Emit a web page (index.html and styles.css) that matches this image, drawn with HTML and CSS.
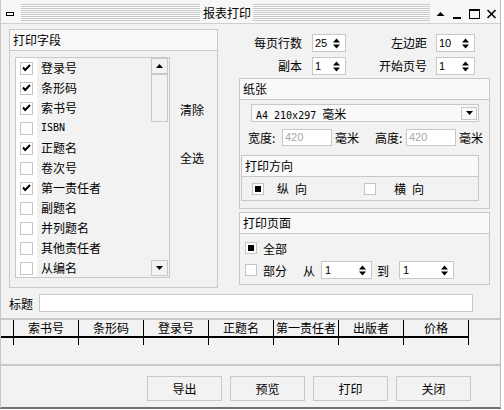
FILE: index.html
```html
<!DOCTYPE html>
<html lang="zh-CN">
<head>
<meta charset="utf-8">
<title>报表打印</title>
<link rel="stylesheet" href="styles.css">
</head>
<body>
<div class="window">
  <div class="titlebar">
    <span class="sysicon"></span>
    <span class="stripes stripes-l"></span>
    <span class="title">报表打印</span>
    <span class="stripes stripes-r"></span>
    <svg class="caption" width="62" height="23" viewBox="0 0 62 23">
      <path d="M0.5 16 4.5 12 8.5 16Z" fill="#000"/>
      <rect x="17" y="17" width="8" height="2" fill="#000"/>
      <rect x="33.5" y="9.5" width="10" height="9" fill="none" stroke="#000" stroke-width="1"/>
      <rect x="33" y="9" width="11" height="2" fill="#000"/>
      <path d="M51.5 10 59.5 18 M59.5 10 51.5 18" stroke="#000" stroke-width="1.6"/>
    </svg>
  </div>
  <div class="content">
    <div class="top">
      <section class="group fields">
        <div class="group-head">打印字段</div>
        <div class="fields-body">
          <div class="list">
            <ul class="items">
              <li class="item"><span class="cell"><span class="check"><svg width="11" height="11" viewBox="0 0 11 11"><path d="M2 4.5 4.2 7 9 2" fill="none" stroke="#000" stroke-width="2"/></svg></span></span><span class="label">登录号</span></li>
              <li class="item"><span class="cell"><span class="check"><svg width="11" height="11" viewBox="0 0 11 11"><path d="M2 4.5 4.2 7 9 2" fill="none" stroke="#000" stroke-width="2"/></svg></span></span><span class="label">条形码</span></li>
              <li class="item"><span class="cell"><span class="check"><svg width="11" height="11" viewBox="0 0 11 11"><path d="M2 4.5 4.2 7 9 2" fill="none" stroke="#000" stroke-width="2"/></svg></span></span><span class="label">索书号</span></li>
              <li class="item"><span class="cell"><span class="check"></span></span><span class="label latin">ISBN</span></li>
              <li class="item"><span class="cell"><span class="check"><svg width="11" height="11" viewBox="0 0 11 11"><path d="M2 4.5 4.2 7 9 2" fill="none" stroke="#000" stroke-width="2"/></svg></span></span><span class="label">正题名</span></li>
              <li class="item"><span class="cell"><span class="check"></span></span><span class="label">卷次号</span></li>
              <li class="item"><span class="cell"><span class="check"><svg width="11" height="11" viewBox="0 0 11 11"><path d="M2 4.5 4.2 7 9 2" fill="none" stroke="#000" stroke-width="2"/></svg></span></span><span class="label">第一责任者</span></li>
              <li class="item"><span class="cell"><span class="check"></span></span><span class="label">副题名</span></li>
              <li class="item"><span class="cell"><span class="check"></span></span><span class="label">并列题名</span></li>
              <li class="item"><span class="cell"><span class="check"></span></span><span class="label">其他责任者</span></li>
              <li class="item"><span class="cell"><span class="check"></span></span><span class="label">从编名</span></li>
            </ul>
            <div class="scrollbar">
              <div class="sb-btn"><svg width="7" height="4" viewBox="0 0 7 4"><path d="M0 4 3.5 0 7 4Z" fill="#000"/></svg></div>
              <div class="sb-thumb"></div>
              <div class="sb-track"></div>
              <div class="sb-btn down"><svg width="7" height="4" viewBox="0 0 7 4"><path d="M0 0 7 0 3.5 4Z" fill="#000"/></svg></div>
            </div>
          </div>
          <div class="actions">
            <span class="action">清除</span>
            <span class="action">全选</span>
          </div>
        </div>
      </section>

      <div class="right">
        <div class="spins">
          <span class="lbl">每页行数</span>
          <span class="spin"><span class="val">25</span><svg class="arr" width="7" height="11" viewBox="0 0 7 11"><path d="M0 4.5 3.5 0.5 7 4.5Z M0 6.5 7 6.5 3.5 10.5Z" fill="#000"/></svg></span>
          <span class="lbl c3">左边距</span>
          <span class="spin"><span class="val">10</span><svg class="arr" width="7" height="11" viewBox="0 0 7 11"><path d="M0 4.5 3.5 0.5 7 4.5Z M0 6.5 7 6.5 3.5 10.5Z" fill="#000"/></svg></span>
          <span class="lbl">副本</span>
          <span class="spin"><span class="val">1</span><svg class="arr" width="7" height="11" viewBox="0 0 7 11"><path d="M0 4.5 3.5 0.5 7 4.5Z M0 6.5 7 6.5 3.5 10.5Z" fill="#000"/></svg></span>
          <span class="lbl c3">开始页号</span>
          <span class="spin"><span class="val">1</span><svg class="arr" width="7" height="11" viewBox="0 0 7 11"><path d="M0 4.5 3.5 0.5 7 4.5Z M0 6.5 7 6.5 3.5 10.5Z" fill="#000"/></svg></span>
        </div>

        <section class="group paper">
          <div class="group-head">纸张</div>
          <div class="dropdown">
            <span class="dd-text"><span class="latin">A4 210x297 </span>毫米</span>
            <span class="dd-btn"><svg width="7" height="4" viewBox="0 0 7 4"><path d="M0 0 7 0 3.5 4Z" fill="#000"/></svg></span>
          </div>
          <div class="size-row">
            <span class="size-lbl w">宽度:</span>
            <span class="input size-in">420</span>
            <span class="unit">毫米</span>
            <span class="size-lbl h">高度:</span>
            <span class="input size-in">420</span>
            <span class="unit">毫米</span>
          </div>
          <div class="group orient">
            <div class="group-head">打印方向</div>
            <div class="orient-body">
              <span class="radio on"></span>
              <span class="opt-lbl first">纵&ensp;向</span>
              <span class="radio second"></span>
              <span class="opt-lbl last">横&ensp;向</span>
            </div>
          </div>
        </section>

        <section class="group pages">
          <div class="group-head">打印页面</div>
          <div class="pages-body">
            <div class="prow">
              <span class="radio on"></span>
              <span class="plbl">全部</span>
            </div>
            <div class="prow prow2">
              <span class="radio"></span>
              <span class="plbl">部分</span>
              <span class="from">从</span>
              <span class="spin from-spin"><span class="val">1</span><svg class="arr" width="7" height="11" viewBox="0 0 7 11"><path d="M0 4.5 3.5 0.5 7 4.5Z M0 6.5 7 6.5 3.5 10.5Z" fill="#000"/></svg></span>
              <span class="to">到</span>
              <span class="spin to-spin"><span class="val">1</span><svg class="arr" width="7" height="11" viewBox="0 0 7 11"><path d="M0 4.5 3.5 0.5 7 4.5Z M0 6.5 7 6.5 3.5 10.5Z" fill="#000"/></svg></span>
            </div>
          </div>
        </section>
      </div>
    </div>

    <div class="title-row">
      <span class="title-lbl">标题</span>
      <span class="input title-in"></span>
    </div>

    <div class="grid-area">
      <div class="grid-head">
        <span class="gc first"></span>
        <span class="gc">索书号</span>
        <span class="gc">条形码</span>
        <span class="gc">登录号</span>
        <span class="gc">正题名</span>
        <span class="gc">第一责任者</span>
        <span class="gc">出版者</span>
        <span class="gc">价格</span>
      </div>
      <div class="grid-row">
        <span class="gc first"></span>
        <span class="gc"></span>
        <span class="gc"></span>
        <span class="gc"></span>
        <span class="gc"></span>
        <span class="gc"></span>
        <span class="gc"></span>
        <span class="gc"></span>
      </div>
    </div>

    <div class="buttons">
      <button class="btn">导出</button>
      <button class="btn">预览</button>
      <button class="btn">打印</button>
      <button class="btn">关闭</button>
    </div>
  </div>
</div>
</body>
</html>
```

FILE: styles.css
```css
* { box-sizing: border-box; }
html, body { margin: 0; padding: 0; }
body {
  background: #ffffff;
  font-family: "Noto Sans CJK SC", "Noto Sans", sans-serif;
  font-size: 12px;
  color: #000;
}

.window {
  width: 501px;
  height: 409px;
  background: #f2f2f2;
  border-left: 1px solid #c8c8c8;
  border-right: 1px solid #bdbdbd;
  border-bottom: 2px solid #707070;
  display: flex;
  flex-direction: column;
}

/* title bar */
.titlebar {
  height: 24px;
  flex: none;
  display: flex;
  align-items: flex-start;
  background: #f7f7f7;
  border-bottom: 1px solid #cfcfcf;
}
.sysicon {
  width: 8px;
  height: 4px;
  border: 1px solid #000;
  background: #fff;
  margin: 12px 0 0 5px;
}
.stripes {
  height: 17px;
  margin-top: 4px;
  background: repeating-linear-gradient(to bottom, #c9c9c9 0 1px, #fbfbfb 1px 2px);
}
.stripes-l { width: 179px; margin-left: 7px; }
.stripes-r { width: 177px; }
.title {
  width: 48px;
  margin: 4px 2px 0 3px;
  line-height: 17px;
  white-space: nowrap;
}
.caption { margin-left: 6px; flex: none; }

.content {
  flex: 1;
  display: flex;
  flex-direction: column;
}

.top {
  display: flex;
  padding: 5px 0 0 8px;
}

/* group boxes */
.group {
  border: 1px solid #c8c8c8;
  display: flex;
  flex-direction: column;
}
.group-head {
  flex: none;
  height: 21px;
  line-height: 20px;
  padding-left: 3px;
  background: #f9f9f9;
  border-bottom: 1px solid #c8c8c8;
}

/* field list */
.fields { width: 209px; height: 259px; }
.fields-body { display: flex; padding: 6px 0 0 5px; }
.list {
  width: 155px;
  height: 221px;
  border: 1px solid #c8c8c8;
  display: flex;
  overflow: hidden;
}
.items { list-style: none; margin: 0; padding: 0; flex: 1; }
.item { height: 20px; display: flex; align-items: center; }
.cell {
  width: 21px;
  height: 20px;
  background: #fff;
  display: flex;
  align-items: center;
  padding-left: 4px;
}
.check {
  width: 13px;
  height: 13px;
  border: 1px solid #c4c4c4;
  background: #fff;
  display: flex;
}
.label { margin-left: 4px; line-height: 20px; white-space: nowrap; }
.latin { font-family: "DejaVu Sans Mono", "Liberation Mono", monospace; font-size: 10px; }

.scrollbar {
  width: 17px;
  margin-right: 1px;
  display: flex;
  flex-direction: column;
}
.sb-btn {
  flex: none;
  height: 16px;
  border: 1px solid #c8c8c8;
  display: flex;
  align-items: center;
  justify-content: center;
}
.sb-btn.down { margin-bottom: 1px; }
.sb-thumb { flex: none; height: 48px; border: 1px solid #c8c8c8; }
.sb-track { flex: 1; }

.actions {
  display: flex;
  flex-direction: column;
  gap: 32px;
  margin-left: 10px;
  padding-top: 45px;
}
.action { line-height: 16px; }

/* right column */
.right {
  width: 251px;
  margin-left: 21px;
  display: flex;
  flex-direction: column;
}
.spins {
  display: grid;
  grid-template-columns: 73px 34px 90px 39px;
  grid-template-rows: 18px 18px;
  row-gap: 5px;
  margin-top: 5px;
  align-items: center;
}
.lbl { text-align: right; padding-right: 10px; line-height: 18px; white-space: nowrap; }
.lbl.c3 { padding-right: 9px; }
.spin {
  height: 18px;
  border: 1px solid #c8c8c8;
  background: #fff;
  display: flex;
  align-items: center;
  padding: 0 5px 0 2px;
  font-family: "Liberation Sans", sans-serif;
  font-size: 11px;
}
.spin .val { flex: 1; }
.arr { flex: none; }

.paper { height: 131px; margin-top: 3px; }
.dropdown {
  margin: 4px 10px 0 11px;
  height: 18px;
  border: 1px solid #c8c8c8;
  background: #f9f9f9;
  display: flex;
  align-items: center;
  padding: 0 1px 0 4px;
}
.dd-text { flex: 1; white-space: nowrap; }
.dd-btn {
  width: 16px;
  height: 13px;
  border: 1px solid #c8c8c8;
  display: flex;
  align-items: center;
  justify-content: center;
}
.size-row {
  display: flex;
  align-items: center;
  height: 17px;
  margin: 7px 0 0 8px;
}
.size-lbl { white-space: nowrap; }
.size-lbl.w { width: 34px; }
.size-lbl.h { width: 31px; margin-left: 16px; }
.unit { margin-left: 3px; width: 24px; white-space: nowrap; }
.input {
  height: 17px;
  border: 1px solid #c8c8c8;
  background: #fff;
  color: #a8a8a8;
  font-family: "Liberation Sans", sans-serif;
  font-size: 11px;
  line-height: 15px;
  padding-left: 2px;
}
.size-in { width: 50px; }

.orient { margin: 9px 10px 0 1px; height: 46px; }
.orient-body {
  height: 23px;
  display: flex;
  align-items: center;
  padding-left: 10px;
}
.radio {
  flex: none;
  width: 12px;
  height: 12px;
  border: 1px solid #c4c4c4;
  background: #fff;
  display: flex;
  align-items: center;
  justify-content: center;
}
.radio.on::after {
  content: "";
  width: 6px;
  height: 6px;
  background: #000;
}
.opt-lbl { white-space: nowrap; }
.opt-lbl.first { margin-left: 13px; width: 30px; }
.radio.second { margin-left: 57px; }
.opt-lbl.last { margin-left: 18px; }

.pages { height: 73px; margin-top: 3px; }
.pages-body { padding: 6px 0 0 5px; }
.prow { display: flex; align-items: center; height: 16px; }
.prow2 { height: 18px; margin-top: 5px; }
.plbl { margin-left: 6px; width: 24px; white-space: nowrap; }
.from { margin-left: 16px; }
.from-spin { margin-left: 6px; width: 51px; padding-left: 3px; }
.to { margin-left: 5px; }
.to-spin { margin-left: 10px; width: 55px; padding-left: 3px; }

/* title row */
.title-row {
  display: flex;
  align-items: center;
  height: 18px;
  margin-top: 6px;
  padding-left: 8px;
}
.title-lbl { width: 24px; white-space: nowrap; }
.title-in { margin-left: 6px; width: 434px; height: 18px; }

/* grid */
.grid-area {
  margin-top: 6px;
  height: 48px;
  border-top: 2px solid #c8c8c8;
  border-bottom: 2px solid #c8c8c8;
}
.grid-head {
  display: flex;
  width: 468px;
  height: 18px;
  border-bottom: 2px solid #000;
}
.grid-row { display: flex; width: 468px; height: 7px; }
.gc {
  width: 65px;
  border-right: 1px solid #000;
  text-align: center;
  line-height: 16px;
  white-space: nowrap;
}
.gc.first { width: 13px; }

/* buttons */
.buttons {
  display: flex;
  justify-content: flex-end;
  gap: 8px;
  padding: 10px 29px 0 0;
}
.btn {
  width: 75px;
  height: 25px;
  border: 1px solid #c8c8c8;
  background: #f2f2f2;
  font-family: inherit;
  font-size: 12px;
  color: #000;
  padding: 0;
  display: flex;
  align-items: center;
  justify-content: center;
}
```
